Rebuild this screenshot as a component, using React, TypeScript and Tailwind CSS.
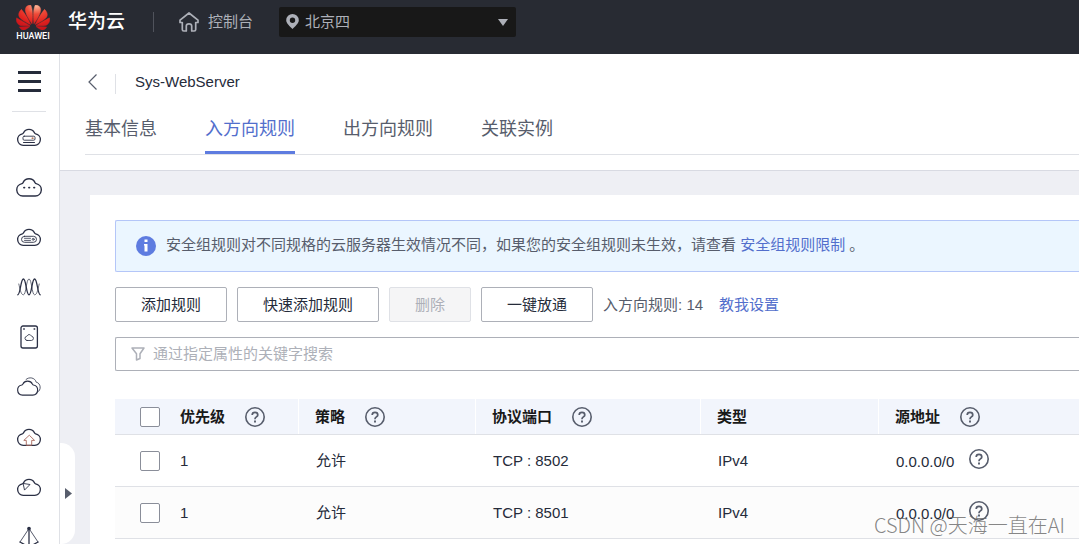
import React, { useState } from 'react';
import { SiHuawei } from 'react-icons/si';

type Rule = {
  id: string;
  priority: number;
  policy: string;
  port: string;
  type: string;
  source: string;
};

const TABS = ['基本信息', '入方向规则', '出方向规则', '关联实例'];

const RULES: Rule[] = [
  { id: 'r1', priority: 1, policy: '允许', port: 'TCP : 8502', type: 'IPv4', source: '0.0.0.0/0' },
  { id: 'r2', priority: 1, policy: '允许', port: 'TCP : 8501', type: 'IPv4', source: '0.0.0.0/0' },
];

const COLUMNS = [
  { label: '优先级', help: true },
  { label: '策略', help: true },
  { label: '协议端口', help: true },
  { label: '类型', help: false },
  { label: '源地址', help: true },
];

const CLOUD = 'M7.2 21.3H18.8A5.8 5.8 0 0 0 19.6 9.8C19 9.7 18.8 9.3 18.4 8.7C16.4 4.2 9.6 4.2 7.6 8.7C7.2 9.3 7 9.7 6.4 9.8A5.8 5.8 0 0 0 7.2 21.3Z';

// Service shortcuts in the left rail
const SERVICES = [
  {
    name: '弹性云服务器',
    art: (
      <>
        <path d={CLOUD} />
        <rect x="7" y="12.2" width="12" height="4" rx="1.2" strokeWidth="0.9" />
        <path d="M7.5 18.5h11" strokeWidth="1" />
        <path d="M16.2 14.2h.8" stroke="#a0522d" strokeWidth="1.3" />
      </>
    ),
  },
  {
    name: '云容器',
    art: (
      <>
        <path d={CLOUD} transform="translate(-1 -1) scale(1.08)" />
        <path d="M8 13.6h.4M13 13.6h.4M18 13.6h.4" strokeWidth="1.9" />
      </>
    ),
  },
  {
    name: '裸金属服务器',
    art: (
      <>
        <path d={CLOUD} />
        <rect x="5.5" y="12.3" width="15" height="6" rx="3" strokeWidth="0.9" />
        <path d="M8.5 14.3h6M8.5 16.4h6" strokeWidth="0.8" />
        <circle cx="17.2" cy="15.3" r="1" strokeWidth="0.8" />
      </>
    ),
  },
  {
    name: '弹性伸缩',
    art: (
      <>
        <path d="M1.8 20.8C4.6 20 4.6 5 7.4 5S10.2 20.8 13 20.8S15.8 5 18.6 5S21.4 20 24.2 20.8" />
        <path d="M2.8 10C3.8 13.500 4.600 20.800 7.400 20.800S10.200 5 13 5S15.800 20.800 18.600 20.800S22.200 13.500 23.200 10" strokeWidth="0.7" />
      </>
    ),
  },
  {
    name: '云硬盘',
    art: (
      <>
        <rect x="5" y="2" width="16.4" height="22" rx="2" />
        <path d="M7.7 5h.6M18.100 5h.6" strokeWidth="1.4" />
        <path d={CLOUD} transform="translate(8.4 8.6) scale(0.37)" strokeWidth="2.3" />
      </>
    ),
  },
  {
    name: '虚拟私有云',
    art: (
      <>
        <path d={CLOUD} transform="translate(0.2 2.4) scale(0.88)" />
        <path d="M10 5.500C13 2.500 19 3.500 20.200 8.200C25 9 25.500 16.500 21.600 18" strokeWidth="0.8" />
      </>
    ),
  },
  {
    name: '云备份',
    art: (
      <>
        <path d={CLOUD} />
        <path d="M13 11.5L7.800 16.400h2.500v4.900h5.400v-4.900h2.500Z" stroke="#a8685c" strokeWidth="0.9" />
      </>
    ),
  },
  {
    name: '内容分发网络',
    art: (
      <>
        <path d={CLOUD} />
        <path d="M7.500 9.500L14 10.500L8.800 15.800Z" strokeWidth="0.9" />
      </>
    ),
  },
  {
    name: '弹性公网IP',
    art: (
      <>
        <circle cx="13" cy="4.500" r="1.200" fill="currentColor" />
        <path d="M13 4.500L4 18M13 4.500L22 18" strokeWidth="0.8" />
        <path d="M13 4.500V23M4 18L13 23L22 18" />
      </>
    ),
  },
];

const HelpIcon: React.FC = () => (
  <svg className="size-5 shrink-0 text-[#575d6c]" viewBox="0 0 20 20" fill="none" stroke="currentColor">
    <circle cx="10" cy="10" r="9.2" strokeWidth="1.6" />
    <path d="M7.2 7.9C7.2 4.5 12.8 4.5 12.8 7.9C12.8 9.900 10 9.900 10 11.900V12.300" strokeWidth="1.7" />
    <path d="M10 13.600v1.800" strokeWidth="1.900" />
  </svg>
);

const Check: React.FC<{ label: string; checked: boolean; onChange: () => void }> = ({ label, checked, onChange }) => (
  <input
    type="checkbox"
    aria-label={label}
    checked={checked}
    onChange={onChange}
    className="block size-5 appearance-none rounded-[2px] border border-[#8a8e99] bg-white checked:bg-[#5e7ce0]"
  />
);

const TopBar: React.FC = () => (
  <header className="flex h-[54px] shrink-0 items-start bg-[#282b33] text-[#adb0b8]">
    <a href="#" className="flex h-11 items-center pl-4 text-white">
      <span className="flex flex-col items-center pt-0.5">
        <svg width="0" height="0" className="absolute">
          <defs>
            <radialGradient id="petal" cx="0.6" cy="0.05" r="0.9">
              <stop offset="0" stopColor="#fbb596" />
              <stop offset="0.35" stopColor="#ee4a38" />
              <stop offset="0.7" stopColor="#e2231f" />
              <stop offset="1" stopColor="#c9141b" />
            </radialGradient>
          </defs>
        </svg>
        <SiHuawei className="h-[25px] w-[34px]" viewBox="0 3 24 18" fill="url(#petal)" stroke="url(#petal)" strokeWidth="0.35" />
        <span className="mt-px font-['Roboto',sans-serif] text-[9px] leading-[10px] font-medium">HUAWEI</span>
      </span>
      <span className="ml-[18px] text-[19px] font-medium">华为云</span>
    </a>
    <div className="ml-7 flex h-11 items-center">
      <span className="h-5 w-px bg-[#50535c]" />
      <a href="#" className="ml-[25px] flex items-center gap-[9px]">
        <svg className="size-5" viewBox="0 0 20 20" fill="none" stroke="currentColor" strokeWidth="1.7" strokeLinejoin="round">
          <path d="M10 1L1 8.2V10.5H3.3V17.5Q3.3 19 4.8 19H7.3V14Q7.3 11.8 10 11.8T12.7 14V19H15.2Q16.7 19 16.7 17.5V10.5H19V8.2Z" />
        </svg>
        <span>控制台</span>
      </a>
    </div>
    <div className="relative mt-[7px] ml-[26px]">
      <svg className="absolute top-[7px] left-[7px] h-[15px] w-[13px]" viewBox="0 0 13 15" fill="currentColor" fillRule="evenodd">
        <path d="M6.5 0A6.3 6.3 0 0 0 .2 6.3C.2 9.5 4 12.5 6.5 15C9 12.5 12.8 9.5 12.8 6.3A6.3 6.3 0 0 0 6.5 0ZM6.5 3.5A2.7 2.7 0 1 1 6.5 8.9A2.7 2.7 0 1 1 6.5 3.5Z" />
      </svg>
      <select aria-label="区域" className="h-[30px] w-[237px] appearance-none rounded-[2px] bg-[#181818] pr-6 pl-[26px]">
        <option>北京四</option>
        <option>上海一</option>
        <option>广州</option>
      </select>
      <svg className="pointer-events-none absolute top-3 right-2 h-[7px] w-[10px]" viewBox="0 0 10 7" fill="currentColor">
        <path d="M0 0h10L5 7Z" />
      </svg>
    </div>
  </header>
);

const Rail: React.FC = () => (
  <nav className="flex w-[60px] shrink-0 flex-col items-center border-r border-[#dfe1e6] bg-white pr-px text-[#2b3045]">
    <button aria-label="菜单" className="flex h-[57px] shrink-0 flex-col items-center justify-center gap-1.5 pb-0.5">
      <span className="h-[3px] w-[23px] bg-[#252b3a]" />
      <span className="h-[3px] w-[23px] bg-[#252b3a]" />
      <span className="h-[3px] w-[23px] bg-[#252b3a]" />
    </button>
    <span className="h-px w-[34px] shrink-0 bg-[#dfe1e6]" />
    {SERVICES.map((s) => (
      <a key={s.name} href="#" aria-label={s.name} className="flex h-[50px] shrink-0 items-center">
        <svg className="size-[26px]" viewBox="0 0 26 26" fill="none" stroke="currentColor" strokeWidth="1.3" strokeLinecap="round" strokeLinejoin="round">
          {s.art}
        </svg>
      </a>
    ))}
  </nav>
);

const App: React.FC = () => {
  const [tab, setTab] = useState('入方向规则');
  const [keyword, setKeyword] = useState('');
  const [selected, setSelected] = useState<string[]>([]);

  const toggle = (id: string) =>
    setSelected((prev) => (prev.includes(id) ? prev.filter((x) => x !== id) : [...prev, id]));

  const allSelected = selected.length === RULES.length;
  const toggleAll = () => setSelected(allSelected ? [] : RULES.map((r) => r.id));

  const button = 'h-[35px] rounded-[2px] border px-[25px]';
  const cell = 'border-b border-[#dfe1e6] pl-[17px]';

  return (
    <div className="flex h-screen flex-col overflow-hidden bg-[#eeeff4] font-['Liberation_Sans','Noto_Sans_CJK_SC',sans-serif] text-[15px] leading-[22px] text-[#252b3a]">
      <TopBar />

      <div className="relative flex min-h-0 flex-1">
        <Rail />

        <button aria-label="展开" className="absolute bottom-0 left-[60px] flex h-[101px] w-[15px] items-center rounded-r-[14px] bg-white pl-[5px]">
          <svg className="h-[11px] w-[7px]" viewBox="0 0 7 11" fill="#575d6c">
            <path d="M0 0L7 5.5L0 11Z" />
          </svg>
        </button>

        <main className="min-w-0 flex-1">
          <div className="border-b border-[#d8dae2] bg-white pb-[15px] pl-[25px]">
            <div className="flex items-center pt-4">
              <button aria-label="返回" className="flex h-6 w-[30px] items-center pl-[3px]">
                <svg className="h-4 w-[9px]" viewBox="0 0 9 16" fill="none" stroke="#575d6c" strokeWidth="1.2">
                  <path d="M8.5 .5L1 8L8.5 15.5" />
                </svg>
              </button>
              <span className="mt-1 h-5 w-px bg-[#dfe1e6]" />
              <h1 className="ml-[19px]">Sys-WebServer</h1>
            </div>
            <div className="mt-5 flex gap-12 border-b border-[#dfe1e6] text-lg leading-[30px] text-[#575d6c]">
              {TABS.map((t) => (
                <button
                  key={t}
                  onClick={() => setTab(t)}
                  className={
                    t === tab
                      ? 'border-b-[3px] border-[#5e7ce0] pb-[7px] text-[#526ecc]'
                      : 'border-b-[3px] border-transparent pb-[7px]'
                  }
                >
                  {t}
                </button>
              ))}
            </div>
          </div>

          <section className="mt-6 ml-[30px] min-h-full bg-white pt-[25px] pl-[25px]">
            <div className="flex h-[52px] items-center gap-2.5 rounded-l-[2px] border border-r-0 border-[#b4c6f8] bg-[#ebf6ff] pl-5 text-[#575d6c]">
              <svg className="size-5 shrink-0" viewBox="0 0 20 20">
                <circle cx="10" cy="10" r="10" fill="#5e7ce0" />
                <path d="M8.5 3.5h3V6h-3ZM8 8h3.5v7.5h-3v-6H8Z" fill="#fff" />
              </svg>
              <p className="pb-0.5 whitespace-nowrap">
                安全组规则对不同规格的云服务器生效情况不同，如果您的安全组规则未生效，请查看{' '}
                <a href="#" className="text-[#526ecc]">安全组规则限制</a> 。
              </p>
            </div>

            <div className="mt-[15px] flex items-center gap-2.5 whitespace-nowrap">
              <button className={`${button} border-[#adb0b8]`}>添加规则</button>
              <button className={`${button} border-[#adb0b8]`}>快速添加规则</button>
              <button disabled className={`${button} border-[#dfe1e6] bg-[#f5f5f6] text-[#adb0b8]`}>删除</button>
              <button className={`${button} border-[#adb0b8]`}>一键放通</button>
              <span className="text-[#575d6c]">入方向规则: 14</span>
              <a href="#" className="ml-1.5 text-[#526ecc]">教我设置</a>
            </div>

            <label className="mt-[15px] flex h-[34px] items-center gap-2 rounded-l-[2px] border border-r-0 border-[#adb0b8] pl-[15px]">
              <svg className="size-3.5 shrink-0" viewBox="0 0 14 14" fill="none" stroke="#adb0b8" strokeWidth="1.5" strokeLinejoin="round">
                <path d="M1 1H13L9 6.8V11.5L5.5 13V6.8Z" />
              </svg>
              <input
                type="text"
                aria-label="搜索"
                value={keyword}
                onChange={(e) => setKeyword(e.target.value)}
                placeholder="通过指定属性的关键字搜索"
                className="min-w-0 flex-1 outline-none placeholder:text-[#adb0b8]"
              />
            </label>

            <table className="mt-7 w-full table-fixed border-separate border-spacing-0 text-left">
              <colgroup>
                <col className="w-[49px]" />
                <col className="w-[135px]" />
                <col className="w-[177px]" />
                <col className="w-[225px]" />
                <col className="w-[178px]" />
                <col />
              </colgroup>
              <thead>
                <tr className="h-9 bg-[#f2f5fc]">
                  <th className="border-b border-[#dfe1e6] pl-[25px]">
                    <Check label="全选" checked={allSelected} onChange={toggleAll} />
                  </th>
                  {COLUMNS.map((c) => (
                    <th key={c.label} className="group border-b border-[#dfe1e6] p-0 font-bold text-[#191919]">
                      <div className="flex h-[35px] items-center gap-5 border-r border-white pl-4 group-last:border-r-0">
                        {c.label}
                        {c.help && <HelpIcon />}
                      </div>
                    </th>
                  ))}
                </tr>
              </thead>
              <tbody>
                {RULES.map((r) => (
                  <tr key={r.id} className="h-[52px] even:bg-[#fcfcfc]">
                    <td className="border-b border-[#dfe1e6] pl-[25px]">
                      <Check label={`选择 ${r.port}`} checked={selected.includes(r.id)} onChange={() => toggle(r.id)} />
                    </td>
                    <td className="border-b border-[#dfe1e6] pl-4">{r.priority}</td>
                    <td className={cell}>{r.policy}</td>
                    <td className={cell}>{r.port}</td>
                    <td className={cell}>{r.type}</td>
                    <td className={cell}>
                      <span className="flex items-start gap-[15px]">
                        <span className="pt-0.5">{r.source}</span>
                        <HelpIcon />
                      </span>
                    </td>
                  </tr>
                ))}
              </tbody>
            </table>
          </section>
        </main>
      </div>

      <p className="pointer-events-none absolute right-3.5 bottom-1 font-['Noto_Sans_CJK_SC',sans-serif] text-[20px] leading-[30px] font-light text-[#666666]/80">
        CSDN @天海一直在AI
      </p>
    </div>
  );
};

export default App;
